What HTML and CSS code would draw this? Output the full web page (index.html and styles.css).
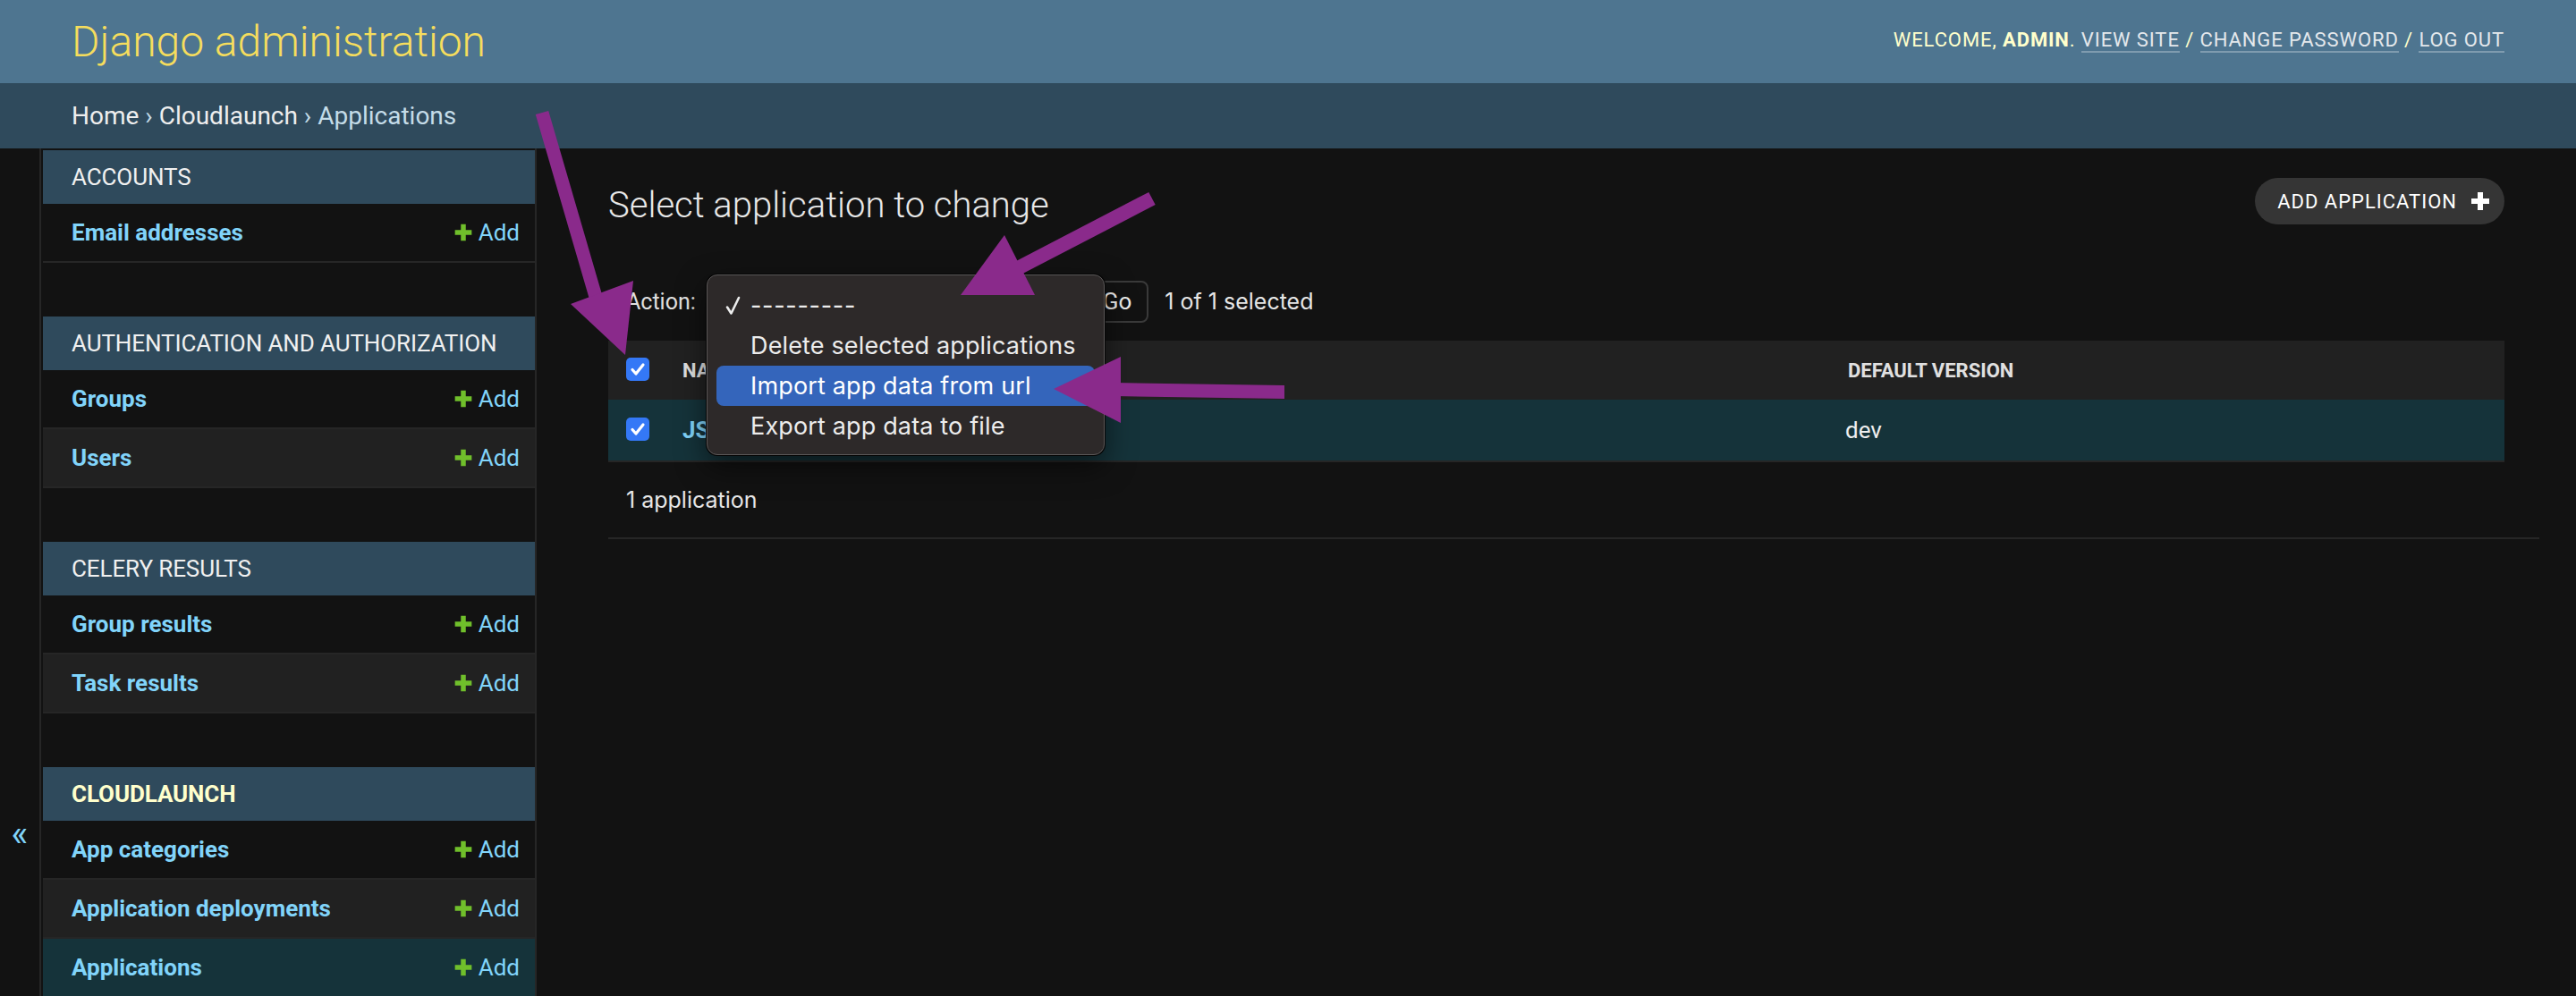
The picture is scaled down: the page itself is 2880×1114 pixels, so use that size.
FILE: index.html
```html
<!DOCTYPE html>
<html lang="en">
<head>
<meta charset="utf-8">
<title>Select application to change | Django site admin</title>
<link rel="stylesheet" href="styles.css">
</head>
<body>
<div class="page">
  <header class="header">
    <div class="branding">Django administration</div>
    <div class="user-tools">Welcome, <strong>admin</strong>. <a class="ut-link">View site</a> / <a class="ut-link">Change password</a> / <a class="ut-link">Log out</a></div>
  </header>
  <nav class="breadcrumbs"><a class="bc-link">Home</a>&nbsp;›&nbsp;<a class="bc-link">Cloudlaunch</a>&nbsp;›&nbsp;Applications</nav>
  <div class="main">
    <div class="toggle"><span class="toggle-glyph">«</span></div>
    <aside class="sidebar">
      <div class="module">
        <div class="caption">Accounts</div>
        <div class="row"><span class="model">Email addresses</span><span class="add"><svg class="plus" viewBox="0 0 20 20"><path d="M7.5 1.5h5v6h6v5h-6v6h-5v-6h-6v-5h6z"/></svg>Add</span></div>
      </div>
      <div class="module">
        <div class="caption">Authentication and Authorization</div>
        <div class="row"><span class="model">Groups</span><span class="add"><svg class="plus" viewBox="0 0 20 20"><path d="M7.5 1.5h5v6h6v5h-6v6h-5v-6h-6v-5h6z"/></svg>Add</span></div>
        <div class="row alt"><span class="model">Users</span><span class="add"><svg class="plus" viewBox="0 0 20 20"><path d="M7.5 1.5h5v6h6v5h-6v6h-5v-6h-6v-5h6z"/></svg>Add</span></div>
      </div>
      <div class="module">
        <div class="caption">Celery Results</div>
        <div class="row"><span class="model">Group results</span><span class="add"><svg class="plus" viewBox="0 0 20 20"><path d="M7.5 1.5h5v6h6v5h-6v6h-5v-6h-6v-5h6z"/></svg>Add</span></div>
        <div class="row alt"><span class="model">Task results</span><span class="add"><svg class="plus" viewBox="0 0 20 20"><path d="M7.5 1.5h5v6h6v5h-6v6h-5v-6h-6v-5h6z"/></svg>Add</span></div>
      </div>
      <div class="module">
        <div class="caption current">Cloudlaunch</div>
        <div class="row"><span class="model">App categories</span><span class="add"><svg class="plus" viewBox="0 0 20 20"><path d="M7.5 1.5h5v6h6v5h-6v6h-5v-6h-6v-5h6z"/></svg>Add</span></div>
        <div class="row alt"><span class="model">Application deployments</span><span class="add"><svg class="plus" viewBox="0 0 20 20"><path d="M7.5 1.5h5v6h6v5h-6v6h-5v-6h-6v-5h6z"/></svg>Add</span></div>
        <div class="row current"><span class="model">Applications</span><span class="add"><svg class="plus" viewBox="0 0 20 20"><path d="M7.5 1.5h5v6h6v5h-6v6h-5v-6h-6v-5h6z"/></svg>Add</span></div>
      </div>
    </aside>
    <main class="content">
      <div class="title-row">
        <h1 class="title">Select application to change</h1>
        <a class="add-btn">Add application <svg class="btn-plus" viewBox="0 0 20 20"><path d="M7 0h6v7h7v6h-7v7h-6v-7h-7v-6h7z"/></svg></a>
      </div>
      <div class="actions">
        <span class="action-label">Action:</span>
        <span class="select-box"></span>
        <span class="go-btn">Go</span>
        <span class="counter">1 of 1 selected</span>
      </div>
      <div class="results">
        <div class="thead">
          <div class="cell c-check"><span class="cb"><svg viewBox="0 0 26 26"><path d="M7 13.5l4 4.5 8-10"/></svg></span></div>
          <div class="cell c-name">Name</div>
          <div class="cell c-ver">Default version</div>
        </div>
        <div class="trow selected">
          <div class="cell c-check"><span class="cb"><svg viewBox="0 0 26 26"><path d="M7 13.5l4 4.5 8-10"/></svg></span></div>
          <div class="cell c-name"><a class="name-link">JS</a></div>
          <div class="cell c-ver">dev</div>
        </div>
      </div>
      <p class="paginator">1 application</p>
    </main>
  </div>

  <div class="menu">
    <div class="menu-item"><svg class="menu-check" viewBox="0 0 20 24"><path d="M3 13.5l4.5 7L16 3"/></svg><span class="dashes">---------</span></div>
    <div class="menu-item">Delete selected applications</div>
    <div class="menu-item hl">Import app data from url</div>
    <div class="menu-item">Export app data to file</div>
  </div>

  <svg class="annotations" viewBox="0 0 2880 1114" width="2880" height="1114">
    <g fill="#8a2a8b" stroke="none">
      <line x1="606" y1="126" x2="666" y2="332" stroke="#8a2a8b" stroke-width="15"/>
      <polygon points="638,340 708,314 699,397"/>
      <line x1="1288" y1="222" x2="1134" y2="302" stroke="#8a2a8b" stroke-width="16"/>
      <polygon points="1123,263 1074,330 1157,330"/>
      <polygon points="1436,431 1436,446 1245,443 1245,428"/>
      <polygon points="1178,435 1253,399 1253,473"/>
    </g>
  </svg>
</div>
</body>
</html>
```

FILE: styles.css
```css
html, body {
  margin: 0;
  padding: 0;
}
body {
  background: #121212;
  font-family: Roboto, "Liberation Sans", sans-serif;
  color: #eeeeee;
}
.page {
  position: relative;
  width: 2880px;
  height: 1114px;
  overflow: hidden;
}
a { text-decoration: none; }

/* header */
.header {
  height: 93px;
  box-sizing: border-box;
  background: #4e7590;
  display: flex;
  align-items: center;
  justify-content: space-between;
  padding: 0 80px;
}
.branding {
  font-size: 48px;
  font-weight: 300;
  color: #f5dd5d;
}
.user-tools {
  margin-top: -4px;
  font-size: 22px;
  letter-spacing: 0.9px;
  text-transform: uppercase;
  color: #ffffcc;
}
.user-tools strong { font-weight: 700; }
.ut-link {
  color: #e4e8ec;
  border-bottom: 2px solid rgba(255, 255, 255, 0.28);
}

.breadcrumbs {
  height: 73px;
  box-sizing: border-box;
  background: #2f4a5c;
  display: flex;
  align-items: center;
  padding: 0 80px;
  font-size: 28px;
  color: #c4dce8;
}
.bc-link { color: #eeeeee; }

/* main */
.main {
  display: flex;
  height: 948px;
}
.toggle {
  flex: 0 0 46px;
  box-sizing: border-box;
  border-right: 2px solid #262626;
  display: flex;
  justify-content: center;
  align-items: flex-start;
  padding-top: 747px;
}
.toggle-glyph {
  font-size: 40px;
  line-height: 40px;
  color: #81d4fa;
}
.sidebar {
  flex: 0 0 554px;
  box-sizing: border-box;
  border-right: 2px solid #262626;
  padding: 2px 0 0 2px;
}
.module { margin-bottom: 60px; }
.caption {
  height: 60px;
  box-sizing: border-box;
  background: #2f4a5c;
  display: flex;
  align-items: center;
  padding-left: 32px;
  font-size: 26px;
  letter-spacing: -0.1px;
  text-transform: uppercase;
  color: #f0f0f0;
}
.caption.current {
  color: #ffffcc;
  font-weight: 700;
}
.row {
  height: 66px;
  box-sizing: border-box;
  border-bottom: 2px solid #262626;
  display: flex;
  align-items: center;
  justify-content: space-between;
  padding: 0 17px 0 32px;
  font-size: 26px;
  color: #81d4fa;
}
.row.alt { background: #212121; }
.row.current { background: #15333a; }
.model { font-weight: 700; }
.add {
  display: flex;
  align-items: center;
  gap: 6px;
}
.plus {
  width: 22px;
  height: 22px;
  fill: #70bf2b;
}

/* content */
.content {
  flex: 1 1 auto;
  padding: 40px 80px 0 80px;
  min-width: 0;
}
.title-row {
  display: flex;
  justify-content: space-between;
  align-items: flex-start;
}
.title {
  margin: 0 0 40px 0;
  font-size: 40px;
  font-weight: 300;
  color: #e8e8e8;
}
.add-btn {
  margin-top: -7px;
  height: 52px;
  box-sizing: border-box;
  border-radius: 26px;
  background: #353535;
  color: #ffffff;
  display: flex;
  align-items: center;
  gap: 16px;
  padding: 0 17px 0 25px;
  font-size: 22px;
  letter-spacing: 1px;
  text-transform: uppercase;
}
.btn-plus {
  width: 20px;
  height: 20px;
  fill: #ffffff;
}

.actions {
  height: 88px;
  box-sizing: border-box;
  padding: 0 20px;
  display: flex;
  align-items: center;
  font-size: 25px;
  color: #e0e0e0;
}
.action-label { margin-right: 12px; }
.select-box {
  width: 416px;
  height: 47px;
  box-sizing: border-box;
  border: 2px solid #3a3a3a;
  border-radius: 8px;
}
.go-btn {
  margin-left: 8px;
  height: 47px;
  box-sizing: border-box;
  border: 2px solid #3a3a3a;
  border-radius: 8px;
  padding: 0 17px 0 17px;
  display: flex;
  align-items: center;
  color: #eeeeee;
  font-size: 26px;
}
.counter {
  margin-left: 18px;
  font-family: Inter, Roboto, sans-serif;
  font-size: 25px;
  color: #e6e6e6;
}

.results {
  border-bottom: 2px solid #262626;
}
.thead, .trow {
  display: flex;
  align-items: center;
}
.thead {
  height: 66px;
  background: #212121;
  font-size: 22px;
  font-weight: 700;
  text-transform: uppercase;
  color: #e0e0e0;
}
.trow {
  height: 68px;
  font-size: 26px;
}
.trow.selected { background: #15333a; }
.c-check {
  flex: 0 0 67px;
  box-sizing: border-box;
  padding-left: 20px;
  display: flex;
  align-items: center;
}
.c-name {
  flex: 0 0 1303px;
  box-sizing: border-box;
  padding-left: 16px;
}
.c-ver {
  flex: 1 1 auto;
  padding-left: 16px;
}
.trow .c-ver { padding-left: 13px; }
.cb {
  width: 26px;
  height: 26px;
  border-radius: 5px;
  background: #3478f6;
  display: block;
  margin-top: -3px;
}
.cb svg {
  display: block;
  width: 26px;
  height: 26px;
  fill: none;
  stroke: #ffffff;
  stroke-width: 3.2;
  stroke-linecap: round;
  stroke-linejoin: round;
}
.name-link {
  color: #81d4fa;
  font-weight: 700;
}

.paginator {
  margin: 0 -39px 0 0;
  padding: 20px 20px;
  line-height: 44px;
  font-family: Inter, Roboto, sans-serif;
  font-size: 25px;
  color: #e6e6e6;
  border-bottom: 2px solid #262626;
}

/* native popup menu */
.menu {
  position: absolute;
  left: 790px;
  top: 307px;
  width: 445px;
  height: 202px;
  box-sizing: border-box;
  padding: 11px 10px;
  background: #2d2929;
  border: 1px solid #5a5757;
  border-radius: 12px;
  box-shadow: 0 0 0 1px #050505, 0 12px 32px rgba(0, 0, 0, 0.55);
  font-family: Inter, Roboto, sans-serif;
  font-size: 27px;
  letter-spacing: 0.15px;
  color: #ececec;
}
.menu-item {
  position: relative;
  height: 45px;
  box-sizing: border-box;
  padding-left: 38px;
  display: flex;
  align-items: center;
  border-radius: 8px;
}
.menu-item.hl {
  background: #3465bb;
  color: #ffffff;
}
.menu-check {
  position: absolute;
  left: 9px;
  top: 11px;
  width: 20px;
  height: 24px;
  fill: none;
  stroke: #ececec;
  stroke-width: 2.6;
  stroke-linecap: round;
  stroke-linejoin: round;
}
.dashes { letter-spacing: 0.7px; }

.annotations {
  position: absolute;
  left: 0;
  top: 0;
  pointer-events: none;
}
```
